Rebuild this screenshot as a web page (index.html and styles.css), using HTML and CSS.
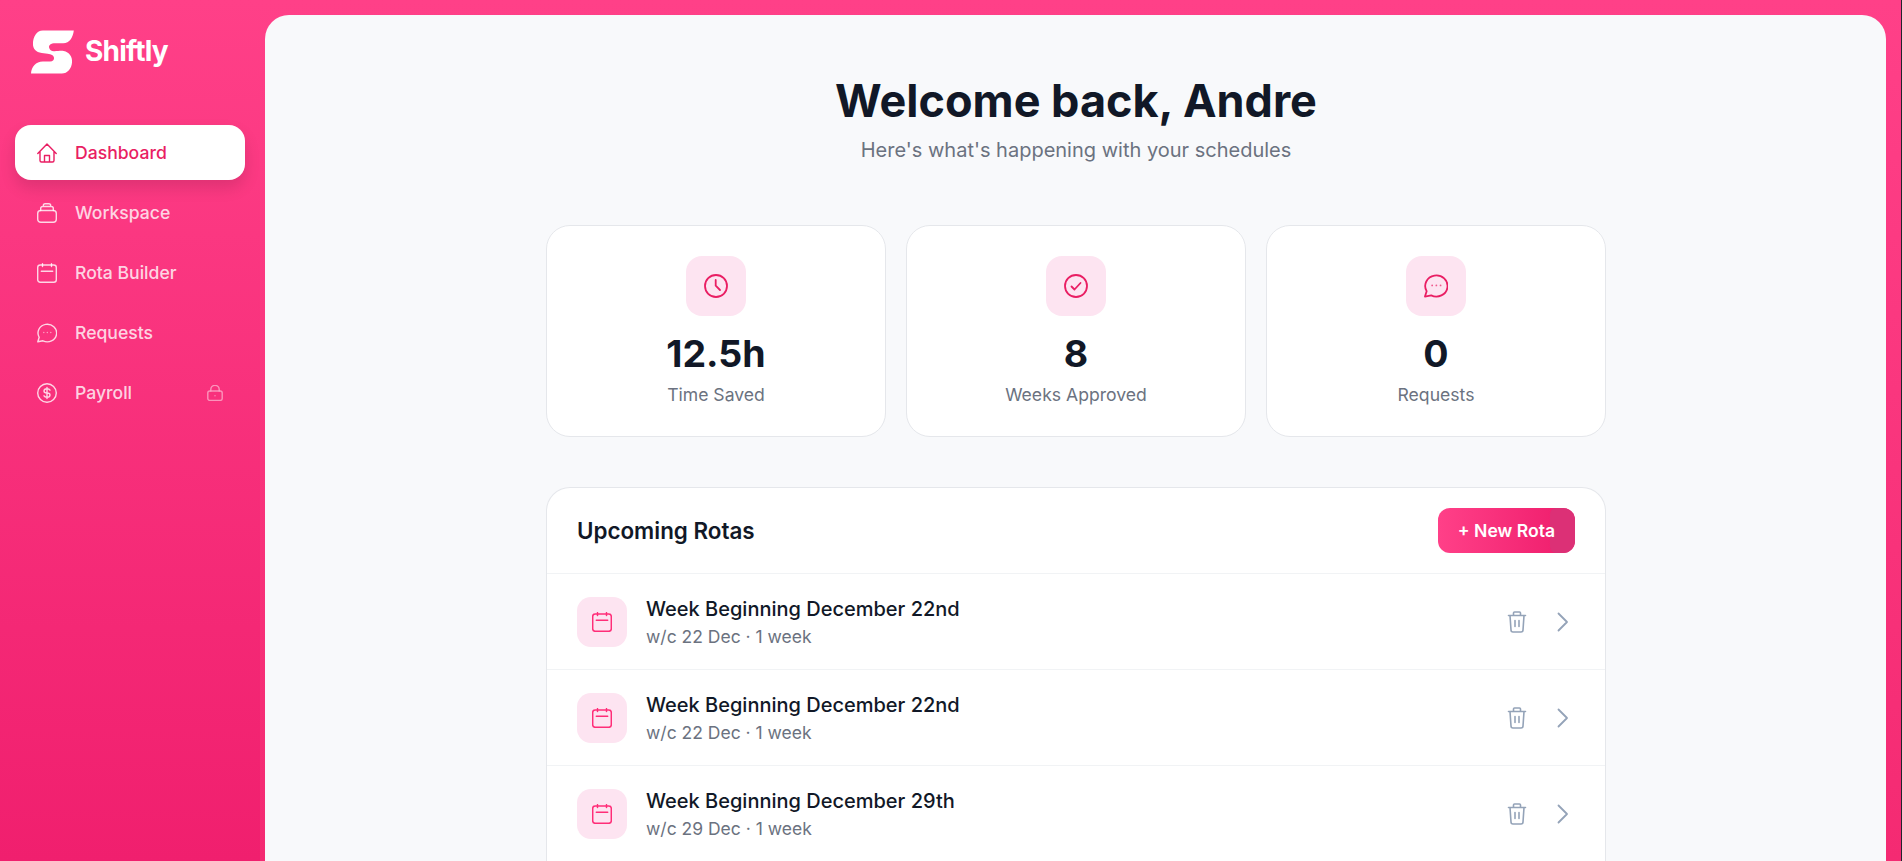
FILE: index.html
```html
<!DOCTYPE html>
<html lang="en">
<head>
<meta charset="utf-8">
<title>Shiftly</title>
<link rel="stylesheet" href="styles.css">
</head>
<body>
<div class="app">
  <aside class="sidebar">
    <div class="brand">
      <svg class="logo" viewBox="0 0 44 44"><path d="M12 0H43.8C43 7 39.5 13 33 13H25C20 13 18 15 18.5 17.5C19 20 21 21.5 24 21.3C28 21 31 20.5 33.5 21C39 22 42.5 27 42 32.5C41.5 39 37.5 44 31.5 44H0C.5 37 5 32 12 31.8H19.5C22.5 31.5 24 29.5 23.5 27.5C23 25.5 21 24.2 17 23.8L11 23C5 22 2 18.5 2 14C2 6 6 0 12 0Z"/></svg>
      <span class="brand-name">Shiftly</span>
    </div>
    <nav class="nav">
      <a class="nav-item active">
        <svg class="nav-icon" viewBox="0 0 20 20"><path d="M.8 10.5L10 1l9.200 9.500M3 8.500v9A1.500 1.500 0 0 0 4.500 19h11a1.500 1.500 0 0 0 1.500-1.500v-9M7.500 19v-6.500h5V19"/></svg>
        <span>Dashboard</span>
      </a>
      <a class="nav-item">
        <svg class="nav-icon" viewBox="0 0 20 20"><rect x=".7" y="7.5" width="18.6" height="11.8" rx="3"/><path d="M3.700 7.500v-2a2 2 0 0 1 2-2h8.600a2 2 0 0 1 2 2v2M6.300 3.500v-1A1.800 1.800 0 0 1 8.100.7h3.800a1.800 1.800 0 0 1 1.800 1.800v1"/></svg>
        <span>Workspace</span>
      </a>
      <a class="nav-item">
        <svg class="nav-icon" viewBox="0 0 20 20"><rect x=".7" y="2" width="18.6" height="17.3" rx="2.5"/><path d="M5.500.7v2.800M14.500.7v2.800M4.300 8.300h11.400"/></svg>
        <span>Rota Builder</span>
      </a>
      <a class="nav-item">
        <svg class="nav-icon" viewBox="0 0 20 20"><path d="M.8 18.800l1.400-4.500A9.300 8.800 0 1 1 6 17.800z"/><path class="dots" d="M6.800 9.500h.01M10.300 9.500h.01M13.800 9.500h.01"/></svg>
        <span>Requests</span>
      </a>
      <a class="nav-item">
        <svg class="nav-icon" viewBox="0 0 20 20"><circle cx="10" cy="10" r="9.3"/><path d="M13 7.200C12.500 6.300 11.400 5.800 10 5.800 8.200 5.800 7 6.700 7 8s1.200 2 3 2 3 .8 3 2-1.200 2.200-3 2.200c-1.400 0-2.500-.5-3-1.400M10 4.500v11"/></svg>
        <span>Payroll</span>
        <svg class="lock" viewBox="0 0 16 16"><rect x=".8" y="6" width="14.4" height="9.4" rx="2"/><path d="M3.800 6V4.500a4.200 4.200 0 0 1 8.400 0V6M8 10.700h.01"/></svg>
      </a>
    </nav>
  </aside>
  <main class="main">
    <div class="content">
      <header class="welcome">
        <h1>Welcome back, Andre</h1>
        <p>Here's what's happening with your schedules</p>
      </header>
      <section class="stats">
        <div class="stat">
          <div class="stat-icon"><svg viewBox="0 0 24 24"><circle cx="12" cy="12" r="11"/><path d="M11.700 6v5.700l4.300 4.300"/></svg></div>
          <div class="stat-value">12.5h</div>
          <div class="stat-label">Time Saved</div>
        </div>
        <div class="stat">
          <div class="stat-icon"><svg viewBox="0 0 24 24"><circle cx="12" cy="12" r="11"/><path d="M7.500 12.500l3 3 6-6.500"/></svg></div>
          <div class="stat-value">8</div>
          <div class="stat-label">Weeks Approved</div>
        </div>
        <div class="stat">
          <div class="stat-icon"><svg viewBox="0 0 20 20"><path d="M.8 18.800l1.400-4.500A9.300 8.800 0 1 1 6 17.800z"/><path class="dots" d="M6.800 9.500h.01M10.300 9.500h.01M13.800 9.500h.01"/></svg></div>
          <div class="stat-value">0</div>
          <div class="stat-label">Requests</div>
        </div>
      </section>
      <section class="panel">
        <div class="panel-head">
          <h2>Upcoming Rotas</h2>
          <button class="new-rota"><span>+ New Rota</span></button>
        </div>
        <div class="row">
          <div class="row-icon"><svg viewBox="0 0 20 20"><rect x=".7" y="2" width="18.6" height="17.3" rx="2.5"/><path d="M5.500.7v2.800M14.500.7v2.800M4.300 8.300h11.400"/></svg></div>
          <div class="row-text">
            <div class="row-title">Week Beginning December 22nd</div>
            <div class="row-sub">w/c 22 Dec · 1 week</div>
          </div>
          <svg class="trash" viewBox="0 0 24 24"><path d="M3.500 5.500h17M8.500 5.500V3a1 1 0 0 1 1-1h5a1 1 0 0 1 1 1v2.500M5 5.500l1 14.500a2 2 0 0 0 2 2h8a2 2 0 0 0 2-2l1-14.500M10 10.500v6M14 10.500v6"/></svg>
          <svg class="chev" viewBox="0 0 24 24"><path d="M7.500 3.500L16 12l-8.500 8.500"/></svg>
        </div>
        <div class="row">
          <div class="row-icon"><svg viewBox="0 0 20 20"><rect x=".7" y="2" width="18.6" height="17.3" rx="2.5"/><path d="M5.500.7v2.800M14.500.7v2.800M4.300 8.300h11.400"/></svg></div>
          <div class="row-text">
            <div class="row-title">Week Beginning December 22nd</div>
            <div class="row-sub">w/c 22 Dec · 1 week</div>
          </div>
          <svg class="trash" viewBox="0 0 24 24"><path d="M3.500 5.500h17M8.500 5.500V3a1 1 0 0 1 1-1h5a1 1 0 0 1 1 1v2.500M5 5.500l1 14.500a2 2 0 0 0 2 2h8a2 2 0 0 0 2-2l1-14.500M10 10.500v6M14 10.500v6"/></svg>
          <svg class="chev" viewBox="0 0 24 24"><path d="M7.500 3.500L16 12l-8.500 8.500"/></svg>
        </div>
        <div class="row">
          <div class="row-icon"><svg viewBox="0 0 20 20"><rect x=".7" y="2" width="18.6" height="17.3" rx="2.5"/><path d="M5.500.7v2.800M14.500.7v2.800M4.300 8.300h11.400"/></svg></div>
          <div class="row-text">
            <div class="row-title">Week Beginning December 29th</div>
            <div class="row-sub">w/c 29 Dec · 1 week</div>
          </div>
          <svg class="trash" viewBox="0 0 24 24"><path d="M3.500 5.500h17M8.500 5.500V3a1 1 0 0 1 1-1h5a1 1 0 0 1 1 1v2.500M5 5.500l1 14.500a2 2 0 0 0 2 2h8a2 2 0 0 0 2-2l1-14.500M10 10.500v6M14 10.500v6"/></svg>
          <svg class="chev" viewBox="0 0 24 24"><path d="M7.500 3.500L16 12l-8.500 8.500"/></svg>
        </div>
      </section>
    </div>
  </main>
</div>
</body>
</html>
```
FILE: styles.css
```css
* { box-sizing: border-box; }
html, body { margin: 0; height: 100%; overflow: hidden; }
body { font-family: Inter, "Liberation Sans", sans-serif; color: #111827; background: #24242e; }
svg { fill: none; stroke: currentColor; stroke-linecap: round; stroke-linejoin: round; flex: none; }
.app { display: flex; width: 1901px; height: 861px; background: linear-gradient(180deg, #ff4088 0%, #f42a72 100%); overflow: hidden; }
.sidebar { width: 260px; flex: none; padding: 30px 15px; background: linear-gradient(180deg, #ff4088 0%, #f01f6e 100%); }
.brand { display: flex; align-items: center; gap: 11px; padding-left: 16px; height: 44px; color: #fff; }
.logo { width: 43px; height: 44px; stroke: none; fill: #fff; }
.brand-name { font-size: 28px; font-weight: 700; letter-spacing: -0.8px; padding-bottom: 2px; }
.nav { display: flex; flex-direction: column; gap: 5px; margin-top: 51px; }
.nav-item { display: flex; align-items: center; height: 55px; padding: 0 22px; border-radius: 16px; color: rgba(255,255,255,.8); font-size: 17.6px; font-weight: 500; }
.nav-item.active { background: #fff; color: #e91e63; box-shadow: 0 8px 16px rgba(0,0,0,.12); }
.nav-icon { width: 20px; height: 20px; margin-right: 18px; stroke-width: 1.4; }
.lock { width: 16px; height: 16px; margin-left: auto; stroke-width: 1.4; opacity: .6; }
.main { width: 1621px; flex: none; margin: 15px 0 0 5px; background: #f8f9fb; border-radius: 24px 24px 0 0; padding-left: 281px; overflow: hidden; }
.content { width: 1060px; }
.welcome { text-align: center; padding-top: 57px; }
h1 { margin: 0; font-size: 45px; line-height: 58px; font-weight: 700; color: #111827; }
.welcome p { margin: 6px 0 0; font-size: 20px; line-height: 28px; color: #6b7280; }
.stats { display: grid; grid-template-columns: repeat(3, 1fr); gap: 20px; margin-top: 61px; }
.stat { height: 212px; background: #fff; border: 1px solid #e5e7eb; border-radius: 24px; padding-top: 30px; display: flex; flex-direction: column; align-items: center; }
.stat-icon { width: 60px; height: 60px; border-radius: 16px; background: #fde4f1; color: #e91e63; display: flex; align-items: center; justify-content: center; }
.stat-icon svg { width: 24px; height: 24px; stroke-width: 1.8; }
.stat-icon svg[viewBox="0 0 20 20"] { stroke-width: 1.5; }
.dots { opacity: .7; }
.stat-value { font-size: 37.5px; line-height: 48px; font-weight: 700; margin-top: 14px; color: #111827; }
.stat-label { font-size: 17.6px; line-height: 24px; color: #6b7280; margin-top: 5px; }
.panel { margin-top: 50px; background: #fff; border: 1px solid #e5e7eb; border-bottom: 0; border-radius: 24px 24px 0 0; overflow: hidden; }
.panel-head { height: 86px; display: flex; align-items: center; justify-content: space-between; padding: 0 30px; border-bottom: 1px solid #f1f3f5; }
h2 { margin: 0; font-size: 22.4px; font-weight: 600; color: #111827; }
.new-rota { position: relative; overflow: hidden; width: 137px; height: 45px; border: 0; border-radius: 12px; color: #fff; font: 600 17.6px Inter, sans-serif; background: linear-gradient(90deg, #ff4088, #f01f6e 90%); }
.new-rota span { position: relative; z-index: 1; }
.new-rota::after { content: ""; position: absolute; top: 0; right: 0; bottom: 0; width: 25px; background: #dc3076; border-radius: 6px 0 0 6px; }
.row { height: 96px; display: flex; align-items: center; padding: 0 30px; border-bottom: 1px solid #f1f3f5; }
.row-icon { width: 50px; height: 50px; border-radius: 14px; background: #fde4f1; color: #ff2d78; display: flex; align-items: center; justify-content: center; }
.row-icon svg { width: 20px; height: 20px; stroke-width: 1.5; }
.row-text { flex: 1; margin-left: 19px; }
.row-title { font-size: 20px; line-height: 26px; font-weight: 500; color: #111827; }
.row-sub { font-size: 17.5px; line-height: 22px; color: #6b7280; margin-top: 4px; }
.trash { width: 24px; height: 24px; color: #94a3b8; stroke-width: 1.6; }
.chev { width: 24px; height: 24px; color: #94a3b8; stroke-width: 1.8; margin-left: 22px; }
```
